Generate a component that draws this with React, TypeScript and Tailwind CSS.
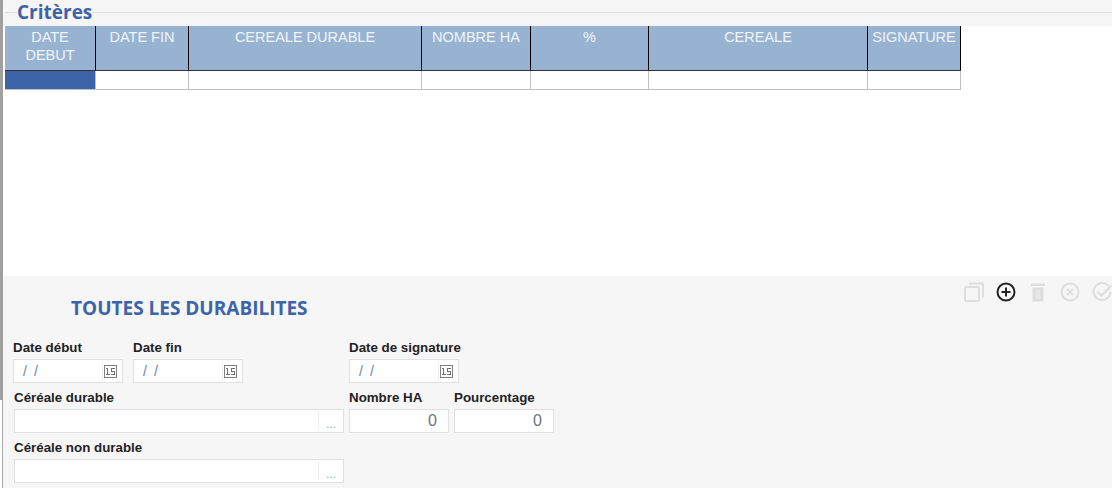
const cols = [
  { w: 91, t: "DATE DEBUT" },
  { w: 93, t: "DATE FIN" },
  { w: 233, t: "CEREALE DURABLE" },
  { w: 109, t: "NOMBRE HA" },
  { w: 118, t: "%" },
  { w: 219, t: "CEREALE" },
  { w: 93, t: "SIGNATURE" },
];

function Calendar() {
  return (
    <svg width="13" height="13" viewBox="0 0 13 13" className="shrink-0" shapeRendering="crispEdges">
      <rect x="0.5" y="0.5" width="12" height="12" fill="none" stroke="#808080" />
      <path d="M2 3.5H3.5V10M2 9.5H5.5M10.5 3.5H7.5V6.5H10.5V9.5H7" fill="none" stroke="#707070" />
    </svg>
  );
}

function DateField() {
  return (
    <div className="w-[110px] h-6 bg-white border border-[#e0e0e0] flex items-center">
      <div className="flex-1 pl-[9px] text-[14px] text-[#6a84a8] tracking-[7px] leading-none">//</div>
      <div className="w-5 h-[19px] border-l border-[#eeeeee] flex items-center justify-end pr-[5px]">
        <Calendar />
      </div>
    </div>
  );
}

function Lookup() {
  return (
    <div className="w-[330px] h-6 bg-white border border-[#e0e0e0] flex justify-end">
      <div className="w-[25px] h-[19px] mt-[1px] border-l border-[#eeeeee] text-[#7fb0da] text-[12px] leading-[26px] text-center">...</div>
    </div>
  );
}

function NumberField() {
  return (
    <div className="w-[100px] h-6 bg-white border border-[#e0e0e0] flex items-center justify-end pr-[11px] text-[16px] text-[#6b7480] leading-none">0</div>
  );
}

function Label({ children }: { children: string }) {
  return <div className="h-[18px] text-[13.33px] leading-[18px] font-bold text-[#222]">{children}</div>;
}

export default function App() {
  return (
    <div className="w-[1112px] h-[488px] overflow-hidden bg-white font-['Liberation_Sans',Arial,sans-serif] flex">
      <div className="w-[3px] h-full shrink-0 flex flex-col">
        <div className="h-[400px] bg-[#a0a0a0]" />
        <div className="flex-1 ml-[2px] bg-[#a8a8a8]" />
      </div>
      <div className="flex-1 flex flex-col min-w-0">
        <div className="h-[26px] bg-[#f6f6f6] relative shrink-0">
          <div className="absolute left-[2px] right-0 top-[12px] h-px bg-[#dddddd]" />
          <div className="absolute left-[14px] top-0 bg-[#f6f6f6] text-[#3d63a8] font-['Open_Sans',sans-serif] font-bold text-[19px] leading-[24px]">Critères</div>
        </div>

        <div className="h-[250px] shrink-0 pl-[2px]">
          <div className="flex w-[956px] h-[45px] bg-[#98b3d1] border-b border-[#333333]">
            {cols.map((c) => (
              <div
                key={c.t}
                style={{ width: c.w }}
                className="shrink-0 border-r border-black text-center text-white/85 text-[14.5px] leading-[18px] pt-[2px]"
              >
                <span className={c.t === "DATE DEBUT" ? "block px-3" : "block whitespace-nowrap"}>{c.t}</span>
              </div>
            ))}
          </div>
          <div className="flex w-[956px] h-[19px] border-b border-[#c0c0c0]">
            {cols.map((c, i) => (
              <div
                key={c.t}
                style={{ width: c.w }}
                className={`shrink-0 border-r border-[#c0c0c0] ${i === 0 ? "bg-[#3d63a8]" : "bg-white"}`}
              />
            ))}
          </div>
        </div>

        <div className="flex-1 bg-[#f6f6f6] relative pl-[10px]">
          <div className="absolute right-0 top-[6px] flex gap-[12px] items-center text-[#dedede]">
            <svg width="20" height="20" viewBox="0 0 20 20" fill="none" stroke="currentColor" strokeWidth="2">
              <rect x="1" y="5" width="14" height="14" rx="1" />
              <path d="M5 1.5h14v14" />
            </svg>
            <svg width="20" height="20" viewBox="0 0 20 20" fill="none" stroke="#222222" strokeWidth="2">
              <circle cx="10" cy="10" r="8.5" />
              <path d="M10 5.5v9M5.5 10h9" />
            </svg>
            <svg width="20" height="20" viewBox="0 0 20 20" fill="currentColor">
              <rect x="3" y="1.5" width="14" height="2.5" />
              <path d="M4.5 5.5h11V19.5h-11z" />
              <path d="M7.5 8h5v9h-5z" fill="#e8e8e8" />
            </svg>
            <svg width="20" height="20" viewBox="0 0 20 20" fill="none" stroke="currentColor" strokeWidth="2">
              <circle cx="10" cy="10" r="8.5" />
              <path d="M7 7l6 6M13 7l-6 6" />
            </svg>
            <svg width="20" height="20" viewBox="0 0 20 20" fill="none" stroke="currentColor" strokeWidth="2">
              <path d="M16.5 4A8.5 8.5 0 1 0 18.5 10" />
              <path d="M5.5 9.5l4 4L19.5 3.5" />
            </svg>
          </div>

          <div className="pt-[19px] pl-[58px] h-[63px] text-[#3d63a8] font-['Open_Sans',sans-serif] font-bold text-[19px] leading-[26px]">TOUTES LES DURABILITES</div>

          <div className="flex">
            <div className="w-[120px]">
              <Label>Date début</Label>
              <div className="mt-[2px]"><DateField /></div>
            </div>
            <div className="w-[216px]">
              <Label>Date fin</Label>
              <div className="mt-[2px]"><DateField /></div>
            </div>
            <div>
              <Label>Date de signature</Label>
              <div className="mt-[2px]"><DateField /></div>
            </div>
          </div>

          <div className="flex mt-[6px]">
            <div className="w-[336px] pl-[1px]">
              <Label>Céréale durable</Label>
              <div className="mt-[2px]"><Lookup /></div>
            </div>
            <div className="w-[105px]">
              <Label>Nombre HA</Label>
              <div className="mt-[2px]"><NumberField /></div>
            </div>
            <div>
              <Label>Pourcentage</Label>
              <div className="mt-[2px]"><NumberField /></div>
            </div>
          </div>

          <div className="mt-[6px] pl-[1px]">
            <Label>Céréale non durable</Label>
            <div className="mt-[2px]"><Lookup /></div>
          </div>
        </div>
      </div>
    </div>
  );
}
